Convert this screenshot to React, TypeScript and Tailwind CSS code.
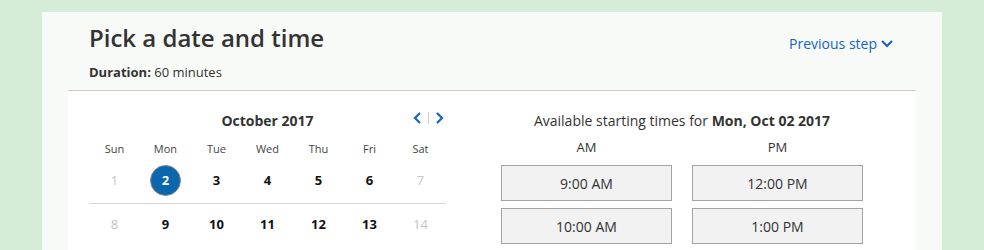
import React from 'react';

const days = ['Sun', 'Mon', 'Tue', 'Wed', 'Thu', 'Fri', 'Sat'];

const weeks = [
	[1, 2, 3, 4, 5, 6, 7],
	[8, 9, 10, 11, 12, 13, 14],
];

const am = ['9:00 AM', '10:00 AM'];
const pm = ['12:00 PM', '1:00 PM'];

const Chevron = ({ dir }: { dir: 'left' | 'right' | 'down' }) => {
	const d =
		dir === 'left' ? 'M7 1 L2 6 L7 11' : dir === 'right' ? 'M2 1 L7 6 L2 11' : 'M1 2 L6 7 L11 2';
	return (
		<svg width={dir === 'down' ? 12 : 9} height={dir === 'down' ? 9 : 12} viewBox={dir === 'down' ? '0 0 12 9' : '0 0 9 12'} fill="none">
			<path d={d} stroke="#1565c0" strokeWidth="2.2" />
		</svg>
	);
};

const TimeButton = ({ label }: { label: string }) => (
	<button className="h-[36px] w-full border border-[#a3a3a3] bg-[#f2f2f2] text-[14px] text-[#333]">
		{label}
	</button>
);

export default function App() {
	return (
		<div className="h-[250px] overflow-hidden bg-[#d5edd7] pt-[12px] font-['Open_Sans',sans-serif]">
			<div className="ml-[42px] w-[900px] bg-[#f8faf8]">
				<div className="flex items-start justify-between pl-[47px] pr-[49px] pt-[10px]">
					<div>
						<h1 className="text-[24px] leading-[32px] font-semibold text-[#333]">Pick a date and time</h1>
						<div className="mt-[9px] text-[13px] leading-[19px] text-[#333]">
							<span className="font-bold">Duration:</span> 60 minutes
						</div>
					</div>
					<a className="mt-[11px] flex items-center gap-[4px] text-[14px] text-[#1565c0]">
						Previous step
						<Chevron dir="down" />
					</a>
				</div>
				<div className="mx-[26px] mt-[8px] flex border-t border-[#cccccc] bg-white pt-[19px] pb-[40px]">
					<div className="ml-[21px] w-[357px]">
						<div className="relative flex h-[20px] items-center justify-center">
							<span className="text-[14px] font-bold text-[#333]">October 2017</span>
							<div className="absolute right-0 top-[2px] flex items-center gap-[6px] pr-[2px]">
								<Chevron dir="left" />
								<span className="h-[12px] w-px bg-[#ccc]" />
								<Chevron dir="right" />
							</div>
						</div>
						<div className="mt-[11px] grid grid-cols-7">
							{days.map((d) => (
								<div key={d} className="text-center text-[11px] leading-[16px] text-[#444]">
									{d}
								</div>
							))}
						</div>
						{weeks.map((w, i) => (
							<div key={i} className={i === 0 ? 'grid grid-cols-7 border-b border-[#d6d6d6] pt-[8px] pb-[7px]' : 'grid grid-cols-7 pt-[5px] pb-[7px]'}>
								{w.map((n, j) => {
									const muted = j === 0 || j === 6;
									const selected = n === 2;
									return (
										<div key={n} className="flex justify-center">
											<span
												className={
													selected
														? 'flex h-[31px] w-[31px] items-center justify-center rounded-full border border-[#8a8a8a] bg-[#0b67ad] text-[13px] font-bold text-white'
														: muted
															? 'flex h-[31px] w-[31px] items-center justify-center text-[13px] text-[#c4c4c4]'
															: 'flex h-[31px] w-[31px] items-center justify-center text-[13px] font-bold text-[#111]'
												}
											>
												{n}
											</span>
										</div>
									);
								})}
							</div>
						))}
					</div>
					<div className="ml-[55px] w-[362px]">
						<div className="h-[20px] text-center text-[14px] text-[#333]">
							Available starting times for <span className="font-bold">Mon, Oct 02 2017</span>
						</div>
						<div className="mt-[8px] grid grid-cols-2 gap-x-[20px]">
							<div className="flex flex-col gap-[7px]">
								<div className="mb-[2px] text-center text-[13px] leading-[18px] text-[#333]">AM</div>
								{am.map((t) => (
									<TimeButton key={t} label={t} />
								))}
							</div>
							<div className="flex flex-col gap-[7px]">
								<div className="mb-[2px] text-center text-[13px] leading-[18px] text-[#333]">PM</div>
								{pm.map((t) => (
									<TimeButton key={t} label={t} />
								))}
							</div>
						</div>
					</div>
				</div>
			</div>
		</div>
	);
}
